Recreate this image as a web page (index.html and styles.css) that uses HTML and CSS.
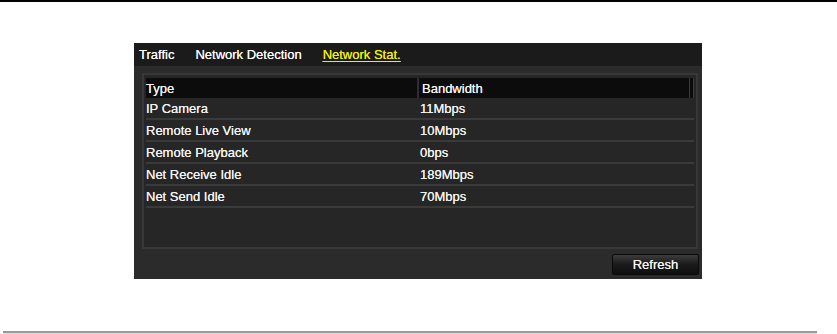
FILE: index.html
```html
<!DOCTYPE html>
<html lang="en">
<head>
  <meta charset="UTF-8" />
  <title>Network Stat.</title>
  <link rel="stylesheet" href="styles.css">
</head>
<body>
  <div class="linea-top"></div>

  <div class="panel">
    <div class="tabs">
      <span class="tab">Traffic</span>
      <span class="tab">Network Detection</span>
      <span class="tab activo">Network Stat.</span>
    </div>

    <div class="tabla">
      <div class="fila cabecera">
        <div class="col1">Type</div>
        <div class="col2">Bandwidth</div>
        <div class="col3"></div>
      </div>
      <div class="fila"><div class="col1">IP Camera</div><div class="col2">11Mbps</div></div>
      <div class="fila"><div class="col1">Remote Live View</div><div class="col2">10Mbps</div></div>
      <div class="fila"><div class="col1">Remote Playback</div><div class="col2">0bps</div></div>
      <div class="fila"><div class="col1">Net Receive Idle</div><div class="col2">189Mbps</div></div>
      <div class="fila"><div class="col1">Net Send Idle</div><div class="col2">70Mbps</div></div>
    </div>

    <div class="botones">
      <button class="refresh">Refresh</button>
    </div>
  </div>

  <div class="linea-bottom"></div>
</body>
</html>
```

FILE: styles.css
```css
body {
  margin: 0;
  font-family: "Liberation Sans", Arial, sans-serif;
  background-color: #fff;
  width: 837px;
  height: 334px;
  overflow: hidden;
}

.linea-top {
  height: 2px;
  background-color: #000;
}

.panel {
  margin: 41px 0 0 134px;
  width: 568px;
  height: 236px;
  background-color: #2b2b2b;
  display: flex;
  flex-direction: column;
}

.tabs {
  height: 23px;
  background-color: #1b1b1b;
  display: flex;
  align-items: center;
  padding-left: 5px;
  gap: 21px;
  font-size: 13px;
  color: #fafafa;
  text-shadow: 0 0 0.4px #fff;
}

.tab.activo {
  color: #f2f000;
  text-decoration: underline;
  text-underline-offset: 2px;
  text-shadow: 0 0 0.4px #f2f000;
}

.tabla {
  margin: 7px 4px 0 8px;
  height: 176px;
  box-sizing: border-box;
  border: 2px solid #383838;
  background-color: #262626;
  padding: 3px 2px 0 2px;
}

.fila {
  display: flex;
  height: 20px;
  align-items: center;
  border-bottom: 2px solid #3a3a3a;
  font-size: 13px;
  color: #f2f2f2;
  text-shadow: 0 0 0.4px #fff;
}

.fila.cabecera {
  background-color: #0c0c0c;
  height: 20px;
  border-bottom: none;
}

.col1 {
  width: 271px;
  height: 100%;
  display: flex;
  align-items: center;
}

.col2 {
  flex: 1;
  padding-left: 3px;
  height: 100%;
  display: flex;
  align-items: center;
}

.cabecera .col2 {
  border-left: 2px solid #2e2e2e;
}

.col3 {
  width: 3px;
  height: 100%;
  border-left: 1px solid #3a3a3a;
  border-right: 1px solid #3a3a3a;
}

.botones {
  display: flex;
  justify-content: flex-end;
  padding: 5px 3px 0 0;
}

.refresh {
  width: 87px;
  height: 21px;
  border: 1px solid #0a0a0a;
  border-radius: 2px;
  background: linear-gradient(#3c3c3c, #1a1a1a 50%, #101010);
  color: #f4f4f4;
  font-family: "Liberation Sans", Arial, sans-serif;
  font-size: 13px;
  text-shadow: 0 0 0.4px #fff;
  padding: 0;
  cursor: pointer;
}

.linea-bottom {
  margin: 52px 0 0 3px;
  width: 814px;
  height: 2px;
  background-color: #999;
  border-bottom: 1px solid #ddd;
}
```
